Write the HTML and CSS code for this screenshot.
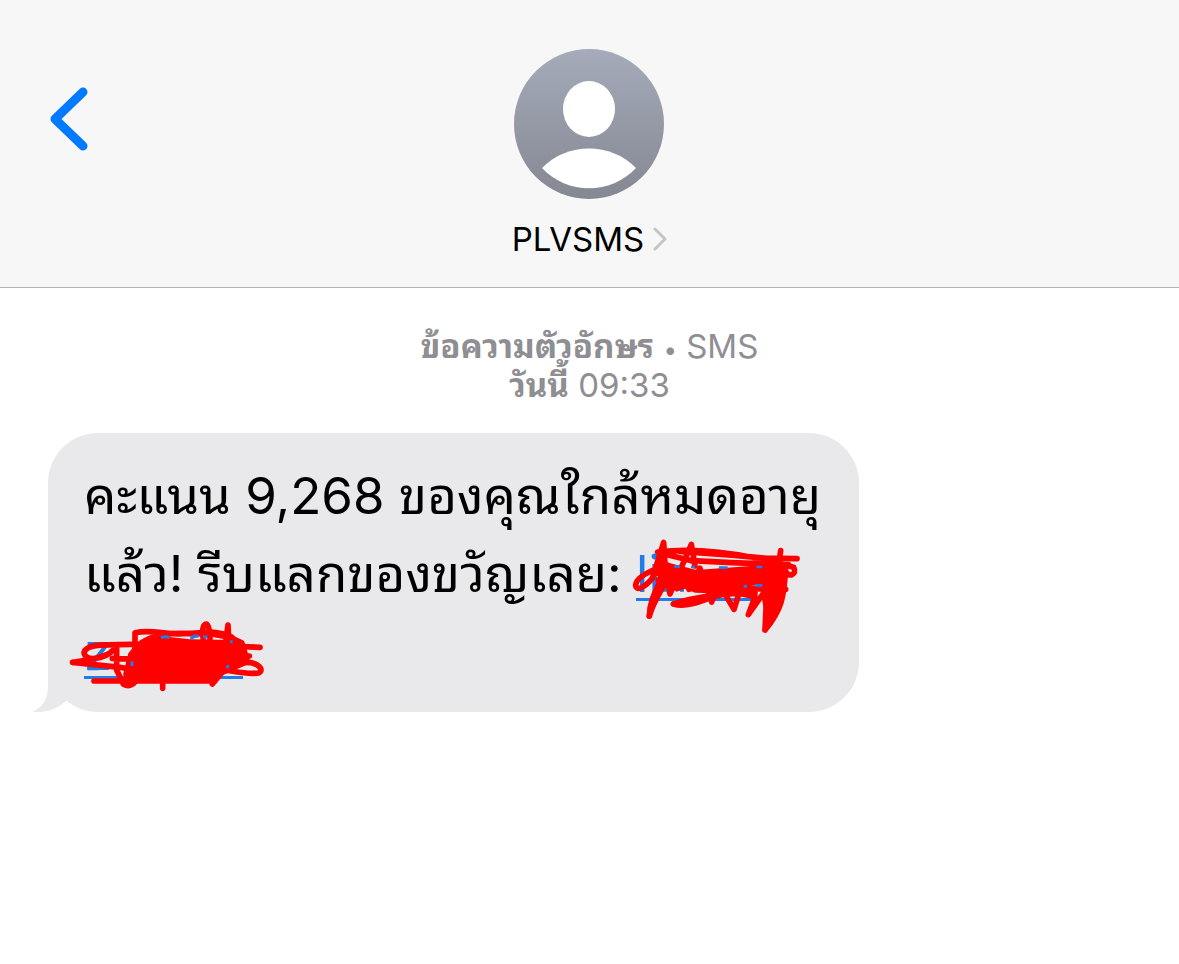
FILE: index.html
```html
<!DOCTYPE html>
<html lang="th">
<head>
  <meta charset="UTF-8">
  <meta name="viewport" content="width=device-width, initial-scale=1.0">
  <title>PLVSMS</title>
  <link rel="stylesheet" href="styles.css">
</head>
<body>
  <!-- Top bar -->
  <header class="top-bar">
    <button class="back-button" type="button" aria-label="กลับ">
      <svg width="40" height="66" viewBox="0 0 40 66">
        <path d="M35 7 L7 34 L35 61" fill="none" stroke="#007aff" stroke-width="9" stroke-linecap="round" stroke-linejoin="round"/>
      </svg>
    </button>
    <button class="contact" type="button">
      <svg class="avatar" width="150" height="150" viewBox="0 0 150 150">
        <defs>
          <linearGradient id="avatarFill" x1="0" y1="0" x2="0" y2="1">
            <stop offset="0" stop-color="#a5abba"/>
            <stop offset="1" stop-color="#858892"/>
          </linearGradient>
        </defs>
        <circle cx="75" cy="75" r="75" fill="url(#avatarFill)"/>
        <ellipse cx="75" cy="60" rx="26" ry="28" fill="#fff"/>
        <path d="M28 119 C53 93 97 93 122 119 C97 146 53 146 28 119 Z" fill="#fff"/>
      </svg>
      <span class="contact-name">
        PLVSMS
        <svg width="14" height="24" viewBox="0 0 14 24">
          <path d="M2 2 L12 12 L2 22" fill="none" stroke="#c5c5c7" stroke-width="3" stroke-linecap="round" stroke-linejoin="round"/>
        </svg>
      </span>
    </button>
  </header>

  <!-- Conversation -->
  <main class="messages">
    <p class="timestamp">
      <b>ข้อความตัวอักษร</b> <span class="dot">•</span> SMS<br>
      <b>วันนี้</b> 09:33
    </p>
    <div class="bubble">
      <svg class="tail" width="40" height="56" viewBox="0 0 40 56">
        <path d="M16 0 V31 C16 43 10 52 0 56 C14 57 26 53 35 44 L40 30 Z" fill="#e9e9eb"/>
      </svg>
      <p class="bubble-text">คะแนน 9,268 ของคุณใกล้หมดอายุ<br>แล้ว! รีบแลกของขวัญเลย: <a class="link link-start" href="#">li<svg class="scribble scribble-start" width="200" height="110" viewBox="0 0 600 330" aria-hidden="true">
          <path d="M150 185 V150 M201 185 V150" fill="none" stroke="#1f7ce8" stroke-width="12"/>
          <path d="M125 120 L160 98 L245 120 L520 100 L515 160 L440 165 L380 170 L365 186 L295 190 L240 188 L210 176 L185 185 L130 150 Z M430 105 L515 100 L512 180 L490 230 L455 290 L440 200 Z" fill="#fe0000"/>
          <g fill="none" stroke="#fe0000" stroke-width="17" stroke-linecap="round" stroke-linejoin="round">
            <path d="M103 258 C104 205 130 170 158 105 C110 120 62 140 62 166 C64 186 92 170 112 145 L146 37 L150 100 L165 192 L200 110 L229 43 L240 108"/>
            <path d="M103 258 C115 215 140 180 155 150 M128 130 L146 60"/>
            <path d="M128 66 C230 54 330 66 420 84 L546 86 M195 64 L360 76 L485 88 M148 72 L230 92"/>
            <path d="M230 92 L350 98 L520 104 M150 165 L190 120 L222 178 L255 115 L280 188 L310 125 L330 180 L372 125"/>
            <path d="M130 150 C250 180 400 175 512 178"/>
            <path d="M175 222 C230 205 330 185 420 190 M175 222 C210 232 250 218 295 200 L330 192 L357 238 L372 190 L420 200 L400 254 L445 190"/>
            <path d="M290 216 L300 190 M450 300 L460 90 M450 300 L470 90 M497 62 L490 110 M450 300 C500 240 508 200 512 110 M450 300 L482 100"/>
            <path d="M490 100 L536 112 C548 134 520 144 512 124"/>
          </g>
          <path d="M178 112 Q186 106 194 112 M228 111 H240 M312 113 H338 M424 111 H442 M386 169 H396 M420 166 H442" fill="none" stroke="#1f7ce8" stroke-width="8"/>
        </svg></a><br><a class="link link-end" href="#">z<svg class="scribble scribble-end" width="220" height="90" viewBox="0 0 660 270" aria-hidden="true">
          <path d="M84 104 H110 M84 176 H115" fill="none" stroke="#1f7ce8" stroke-width="9"/>
          <path d="M225 105 L300 78 L390 88 L520 90 L555 100 L572 160 L490 195 L470 213 L190 213 L190 190 L205 130 Z" fill="#fe0000"/>
          <g fill="none" stroke="#fe0000" stroke-width="17" stroke-linecap="round" stroke-linejoin="round">
            <path d="M225 120 V68 C270 58 300 70 355 72 L455 66 C495 70 520 80 522 90"/>
            <path d="M38 157 C90 148 145 140 160 120 C130 150 75 155 72 128 C80 98 130 105 300 102 L600 112"/>
            <path d="M38 157 L180 172 L250 185 M157 145 L240 148 M170 115 V180 L190 222 C210 235 225 220 235 200"/>
            <path d="M102 213 L465 213 M308 200 V235 M457 222 L500 170"/>
            <path d="M430 90 C425 55 430 42 440 42 C448 50 450 70 450 90 M498 88 L504 45 L506 88"/>
            <path d="M490 140 L568 138 M500 156 L574 158 C600 165 610 180 598 188 C570 195 530 185 495 180"/>
            <path d="M245 98 C280 75 340 65 400 72 C450 68 500 75 545 98"/>
          </g>
          <path d="M303 83 Q317 77 328 83 M392 87 Q402 76 416 79 M430 81 H442 M510 95 H518 M216 154 V168 M506 166 L500 174" fill="none" stroke="#1f7ce8" stroke-width="9"/>
        </svg></a></p>
    </div>
  </main>
</body>
</html>
```

FILE: styles.css
```css
* {
  box-sizing: border-box;
}

body {
  margin: 0;
  background-color: #fff;
  color: #000;
  font-family: Inter, Thonburi, "Noto Sans Thai Looped", Loma, "Noto Sans", sans-serif;
}

button {
  padding: 0;
  border: none;
  background: none;
  color: inherit;
  font: inherit;
  cursor: pointer;
}

.top-bar {
  display: grid;
  grid-template-columns: 1fr auto 1fr;
  align-items: start;
  padding: 49px 48px 28px;
  border-bottom: 1px solid #b2b2b4;
  background-color: #f7f7f7;
}

.back-button {
  justify-self: start;
  margin-top: 36px;
}

.back-button svg,
.avatar {
  display: block;
}

.contact {
  display: flex;
  flex-direction: column;
  align-items: center;
  gap: 20px;
}

.contact-name {
  display: flex;
  align-items: center;
  gap: 9px;
  font-size: 33px;
  line-height: 40px;
}

.messages {
  padding: 39px 48px;
}

.timestamp {
  margin: 0 0 28px;
  color: #8e8e93;
  font-size: 33px;
  line-height: 39px;
  text-align: center;
}

.dot {
  font-size: 24px;
  line-height: 1;
}

.bubble {
  position: relative;
  width: fit-content;
  padding: 24px 38px 21px 36px;
  border-radius: 50px;
  background-color: #e9e9eb;
}

.tail {
  position: absolute;
  left: -16px;
  bottom: 0;
}

.bubble-text {
  margin: 0;
  font-size: 51px;
  line-height: 78px;
}

.link {
  display: inline-block;
  position: relative;
  height: 66px;
  line-height: 78px;
  border-bottom: 3px solid #1f7ce8;
  color: #1f7ce8;
  text-decoration: none;
  vertical-align: top;
}

.link-start {
  width: 124px;
}

.link-end {
  width: 159px;
}

.scribble {
  position: absolute;
}

.scribble-start {
  left: -21px;
  top: -5px;
}

.scribble-end {
  left: -24px;
  top: -3px;
}
```
